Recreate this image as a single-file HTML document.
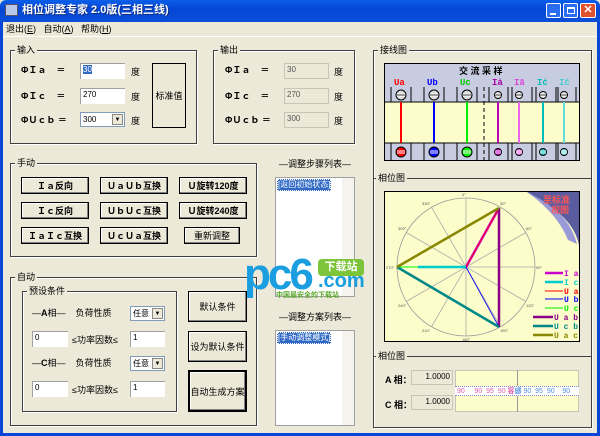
<!DOCTYPE html>
<html><head><meta charset="utf-8"><style>
*{margin:0;padding:0;box-sizing:border-box}
body{width:600px;height:436px;overflow:hidden;background:#ece9d8;font-family:"Liberation Sans","Noto Sans CJK SC",sans-serif;font-size:9px;color:#000;position:relative}
.a{position:absolute}
.grp{position:absolute;border:1px solid #404040;box-shadow:1px 1px 0 #fff inset,1px 1px 0 #fff}
.gt{position:absolute;background:#ece9d8;padding:0 2px;top:-7px;left:4px;font-size:9px;line-height:12px}
.btn{position:absolute;border:1px solid #000;box-shadow:inset -1px -1px 0 #808080,inset 1px 1px 0 #fff;display:flex;align-items:center;justify-content:center;font-size:9px;font-weight:bold;background:#ece9d8}
.in{position:absolute;background:#fff;border-top:1px solid #a0a0a0;border-left:1px solid #a0a0a0;font-size:8px;padding:1px 2px;line-height:10px}
.ro{position:absolute;background:#ece9d8;border:1px solid #c8c5b5;font-size:8px;padding:1px 2px;color:#555;line-height:10px}
.lb{position:absolute;font-size:9px;font-weight:bold;line-height:12px}
.dd{position:absolute;background:#fff;border:1px solid #7f9db9;font-size:8px;line-height:13px;padding-left:2px}
.dd i{position:absolute;right:1px;top:1px;width:11px;height:11px;background:#ece9d8;border:1px solid #888;font-style:normal;font-size:6px;text-align:center;line-height:10px}
</style></head><body>
<div class="a" style="left:0;top:0;width:600px;height:22px;background:linear-gradient(#0a5fe8,#0546d6 40%,#0a4fd8);border-radius:6px 6px 0 0"></div>
<div class="a" style="left:5px;top:4px;width:13px;height:12px;background:#b8c8e8;border:1px solid #556"></div>
<div class="a" style="left:22px;top:3px;color:#fff;font-weight:bold;font-size:11px;line-height:15px;text-shadow:1px 1px #0a2a80">相位调整专家 2.0版(三相三线)</div>
<div class="a" style="left:546px;top:3px;width:15px;height:15px;background:#2b6df0;border:1px solid #fff;border-radius:2px"><div class="a" style="left:3px;top:9px;width:6px;height:2px;background:#fff"></div></div>
<div class="a" style="left:563px;top:3px;width:15px;height:15px;background:#2b6df0;border:1px solid #fff;border-radius:2px"><div class="a" style="left:3px;top:3px;width:8px;height:7px;border:1px solid #fff;border-top-width:2px"></div></div>
<div class="a" style="left:580px;top:3px;width:16px;height:15px;background:#e0512e;border:1px solid #fff;border-radius:2px;color:#fff;font-weight:bold;font-size:11px;text-align:center;line-height:13px">✕</div>
<div class="a" style="left:0;top:22px;width:3px;height:414px;background:#0846d8"></div>
<div class="a" style="left:597px;top:22px;width:3px;height:414px;background:#0846d8"></div>
<div class="a" style="left:0;top:433px;width:600px;height:3px;background:#0846d8"></div>
<div class="a" style="left:6px;top:23px;font-size:9px;line-height:12px">退出(<u>E</u>)&nbsp;&nbsp;&nbsp;自动(<u>A</u>)&nbsp;&nbsp;&nbsp;帮助(<u>H</u>)</div>
<div class="a" style="left:3px;top:36px;width:594px;height:1px;background:#fff"></div>

<div class="grp" style="left:10px;top:50px;width:187px;height:94px"><div class="gt">输入</div></div>
<div class="lb" style="left:21px;top:64px">ΦＩａ&nbsp;&nbsp;&nbsp;&nbsp;＝</div>
<div class="lb" style="left:21px;top:90px">ΦＩｃ&nbsp;&nbsp;&nbsp;&nbsp;＝</div>
<div class="lb" style="left:21px;top:114px">ΦＵｃｂ ＝</div>
<div class="in" style="left:80px;top:63px;width:45px;height:16px"><span style="background:#316ac5;color:#fff">30</span></div>
<div class="in" style="left:80px;top:88px;width:45px;height:16px">270</div>
<div class="dd" style="left:80px;top:112px;width:45px;height:15px">300<i>▼</i></div>
<div class="a" style="left:131px;top:65px">度</div><div class="a" style="left:131px;top:90px">度</div><div class="a" style="left:131px;top:114px">度</div>
<div class="a" style="left:152px;top:63px;width:34px;height:65px;border:1px solid #000;display:flex;align-items:center;justify-content:center;font-size:9px">标准值</div>

<div class="grp" style="left:213px;top:50px;width:142px;height:94px"><div class="gt">输出</div></div>
<div class="lb" style="left:225px;top:64px">ΦＩａ&nbsp;&nbsp;&nbsp;&nbsp;＝</div>
<div class="lb" style="left:225px;top:90px">ΦＩｃ&nbsp;&nbsp;&nbsp;&nbsp;＝</div>
<div class="lb" style="left:225px;top:114px">ΦＵｃｂ ＝</div>
<div class="ro" style="left:284px;top:63px;width:45px;height:16px">30</div>
<div class="ro" style="left:284px;top:88px;width:45px;height:16px">270</div>
<div class="ro" style="left:284px;top:112px;width:45px;height:16px">300</div>
<div class="a" style="left:334px;top:65px">度</div><div class="a" style="left:334px;top:90px">度</div><div class="a" style="left:334px;top:114px">度</div>

<div class="grp" style="left:10px;top:163px;width:247px;height:94px"><div class="gt">手动</div></div>
<div class="btn" style="left:21px;top:177px;width:68px;height:17px">Ｉａ反向</div>
<div class="btn" style="left:100px;top:177px;width:68px;height:17px">ＵａＵｂ互换</div>
<div class="btn" style="left:179px;top:177px;width:68px;height:17px">Ｕ旋转120度</div>
<div class="btn" style="left:21px;top:202px;width:68px;height:17px">Ｉｃ反向</div>
<div class="btn" style="left:100px;top:202px;width:68px;height:17px">ＵｂＵｃ互换</div>
<div class="btn" style="left:179px;top:202px;width:68px;height:17px">Ｕ旋转240度</div>
<div class="btn" style="left:21px;top:227px;width:68px;height:17px">ＩａＩｃ互换</div>
<div class="btn" style="left:100px;top:227px;width:68px;height:17px">ＵｃＵａ互换</div>
<div class="btn" style="left:184px;top:227px;width:56px;height:17px;font-weight:normal">重新调整</div>

<div class="a" style="left:279px;top:157px;font-size:9px">—调整步骤列表—</div>
<div class="a" style="left:275px;top:177px;width:80px;height:120px;background:#fff;border:1px solid #a0a0a0"><span style="position:absolute;left:1px;top:1px;background:#316ac5;color:#fff;font-size:8px;line-height:10px;border:1px dotted #fff">[返回初始状态]</span><div class="a" style="right:0;top:0;width:12px;height:118px;background:#f4f3ee"></div></div>
<div class="a" style="left:279px;top:310px;font-size:9px">—调整方案列表—</div>
<div class="a" style="left:275px;top:330px;width:80px;height:96px;background:#fff;border:1px solid #a0a0a0"><span style="position:absolute;left:1px;top:1px;background:#316ac5;color:#fff;font-size:8px;line-height:10px;border:1px dotted #fff">[手动调整模式]</span><div class="a" style="right:0;top:0;width:12px;height:94px;background:#f4f3ee"></div></div>

<div class="grp" style="left:10px;top:277px;width:247px;height:149px"><div class="gt">自动</div></div>
<div class="grp" style="left:22px;top:291px;width:155px;height:121px"><div class="gt">预设条件</div></div>
<div class="a" style="left:32px;top:307px;font-size:9px;line-height:12px">—<b>A</b>相—&nbsp;&nbsp;&nbsp;&nbsp;负荷性质</div>
<div class="dd" style="left:130px;top:306px;width:35px;height:15px">任意<i>▼</i></div>
<div class="in" style="left:32px;top:331px;width:36px;height:16px">0</div>
<div class="a" style="left:72px;top:333px">≤功率因数≤</div>
<div class="in" style="left:130px;top:331px;width:35px;height:16px">1</div>
<div class="a" style="left:32px;top:357px;font-size:9px;line-height:12px">—<b>C</b>相—&nbsp;&nbsp;&nbsp;&nbsp;负荷性质</div>
<div class="dd" style="left:130px;top:356px;width:35px;height:15px">任意<i>▼</i></div>
<div class="in" style="left:32px;top:381px;width:36px;height:16px">0</div>
<div class="a" style="left:72px;top:383px">≤功率因数≤</div>
<div class="in" style="left:130px;top:381px;width:35px;height:16px">1</div>
<div class="btn" style="left:188px;top:291px;width:59px;height:31px;font-weight:normal">默认条件</div>
<div class="btn" style="left:188px;top:331px;width:59px;height:31px;font-weight:normal">设为默认条件</div>
<div class="btn" style="left:188px;top:370px;width:59px;height:42px;font-weight:normal;border:2px solid #000">自动生成方案</div>

<div class="a" style="left:244px;top:253px;font-size:44px;font-weight:bold;color:#1a9ee0;line-height:44px;letter-spacing:-3px">pc6</div>
<div class="a" style="left:318px;top:259px;width:46px;height:17px;background:#7cc43a;border-radius:4px;color:#fff;font-size:11px;font-weight:bold;text-align:center;line-height:17px">下载站</div>
<div class="a" style="left:318px;top:270px;font-size:20px;font-weight:bold;color:#1a9ee0;line-height:22px">.com</div>
<div class="a" style="left:276px;top:291px;font-size:7px;color:#5aa82a;font-weight:bold;line-height:9px">中国最安全的下载站</div>

<div class="grp" style="left:373px;top:50px;width:219px;height:378px"><div class="gt">接线图</div></div>
<div class="a" style="left:373px;top:178px;width:219px;height:1px;background:#404040"></div>
<div class="a" style="left:376px;top:172px;background:#ece9d8;padding:0 2px;line-height:12px">相位图</div>
<div class="a" style="left:373px;top:356px;width:219px;height:1px;background:#404040"></div>
<div class="a" style="left:376px;top:350px;background:#ece9d8;padding:0 2px;line-height:12px">相位图</div>

<svg class="a" style="left:384px;top:63px" width="196" height="98" viewBox="0 0 196 98">
<rect x="0.5" y="0.5" width="195" height="97" fill="#fdfccb" stroke="#000"/>
<rect x="1" y="1" width="194" height="23" fill="#c8cce0"/>
<rect x="1" y="24" width="194" height="15" fill="#c8cce0"/>
<rect x="1" y="80" width="194" height="17" fill="#c8cce0"/>
<line x1="0" y1="39" x2="196" y2="39" stroke="#000"/><line x1="0" y1="80" x2="196" y2="80" stroke="#000"/>
<text x="75" y="11" font-size="9" font-weight="bold" font-family="Liberation Sans,Noto Sans CJK SC,sans-serif">交 流 采 样</text>
<g font-size="9" font-weight="bold" font-family="Liberation Mono,monospace">
<text x="10" y="22" fill="#f00">Ua</text><text x="43" y="22" fill="#00f">Ub</text><text x="76" y="22" fill="#0c0">Uc</text>
<text x="108" y="22" fill="#a0a">Iȧ</text><text x="130" y="22" fill="#d4d">Iā</text><text x="153" y="22" fill="#0bb">Iċ</text><text x="175" y="22" fill="#4cc">Ic̄</text></g>
<g stroke="#000" stroke-width="1">
<line x1="7" y1="24" x2="7" y2="39"/><line x1="27" y1="24" x2="27" y2="39"/><line x1="40" y1="24" x2="40" y2="39"/><line x1="60" y1="24" x2="60" y2="39"/><line x1="73" y1="24" x2="73" y2="39"/><line x1="93" y1="24" x2="93" y2="39"/><line x1="105" y1="24" x2="105" y2="39"/><line x1="124" y1="24" x2="124" y2="39"/><line x1="128" y1="24" x2="128" y2="39"/><line x1="148" y1="24" x2="148" y2="39"/><line x1="152" y1="24" x2="152" y2="39"/><line x1="172" y1="24" x2="172" y2="39"/><line x1="174" y1="24" x2="174" y2="39"/><line x1="192" y1="24" x2="192" y2="39"/>
<line x1="7" y1="80" x2="7" y2="97"/><line x1="27" y1="80" x2="27" y2="97"/><line x1="40" y1="80" x2="40" y2="97"/><line x1="60" y1="80" x2="60" y2="97"/><line x1="73" y1="80" x2="73" y2="97"/><line x1="93" y1="80" x2="93" y2="97"/><line x1="105" y1="80" x2="105" y2="97"/><line x1="124" y1="80" x2="124" y2="97"/><line x1="128" y1="80" x2="128" y2="97"/><line x1="148" y1="80" x2="148" y2="97"/><line x1="152" y1="80" x2="152" y2="97"/><line x1="172" y1="80" x2="172" y2="97"/><line x1="174" y1="80" x2="174" y2="97"/><line x1="192" y1="80" x2="192" y2="97"/>
</g>
<line x1="100" y1="24" x2="100" y2="97" stroke="#000" stroke-dasharray="4,3"/>
<g stroke-width="2"><line x1="17" y1="39" x2="17" y2="80" stroke="#f00"/><line x1="50" y1="39" x2="50" y2="80" stroke="#00f"/><line x1="83" y1="39" x2="83" y2="80" stroke="#0e0"/><line x1="114" y1="39" x2="114" y2="80" stroke="#b0b"/><line x1="135" y1="39" x2="135" y2="80" stroke="#e6e"/><line x1="159" y1="39" x2="159" y2="80" stroke="#0bb"/><line x1="180" y1="39" x2="180" y2="80" stroke="#6dd"/></g>
<g stroke="#000" stroke-width="1">
<circle cx="17" cy="32" r="5" fill="#ddd"/><circle cx="50" cy="32" r="5" fill="#ddd"/><circle cx="83" cy="32" r="5" fill="#ddd"/><circle cx="114" cy="32" r="3.5" fill="#ddd"/><circle cx="135" cy="32" r="3.5" fill="#ddd"/><circle cx="159" cy="32" r="3.5" fill="#ddd"/><circle cx="180" cy="32" r="3.5" fill="#ddd"/>
<circle cx="17" cy="89" r="5" fill="#f00"/><circle cx="50" cy="89" r="5" fill="#00f"/><circle cx="83" cy="89" r="5" fill="#0e0"/><circle cx="114" cy="89" r="3.5" fill="#b0b"/><circle cx="135" cy="89" r="3.5" fill="#e6e"/><circle cx="159" cy="89" r="3.5" fill="#0bb"/><circle cx="180" cy="89" r="3.5" fill="#6dd"/>
</g>
<path d="M13 31h8M13 33h8M46 31h8M46 33h8M79 31h8M79 33h8M111 31h6M111 33h6M132 31h6M132 33h6M156 31h6M156 33h6M177 31h6M177 33h6M13 88h8M13 90h8M46 88h8M46 90h8M79 88h8M79 90h8M111 88h6M111 90h6M132 88h6M132 90h6M156 88h6M156 90h6M177 88h6M177 90h6" stroke="#fff" stroke-width="1"/>
<path d="M13 32h8M46 32h8M79 32h8M111 32h6M132 32h6M156 32h6M177 32h6" stroke="#000" stroke-width="0.8"/>
</svg>

<svg class="a" style="left:384px;top:191px" width="196" height="151" viewBox="384 191 196 151" font-family="Liberation Sans,sans-serif">
<rect x="384.5" y="191.5" width="195" height="150" fill="#fdfccb" stroke="#000"/>
<circle cx="466" cy="267" r="69" fill="none" stroke="#999" stroke-width="0.8"/>
<g stroke="#aaa" stroke-width="0.8">
<line x1="466" y1="198" x2="466" y2="336"/><line x1="397" y1="267" x2="535" y2="267"/>
<line x1="500.5" y1="207.2" x2="431.5" y2="326.8"/><line x1="525.8" y1="232.5" x2="406.2" y2="301.5"/>
<line x1="431.5" y1="207.2" x2="500.5" y2="326.8"/><line x1="406.2" y1="232.5" x2="525.8" y2="301.5"/></g>
<g font-size="4" fill="#555"><text x="462" y="196">0°</text><text x="500" y="205">30°</text><text x="526" y="230">60°</text><text x="536" y="269">90°</text><text x="526" y="307">120°</text><text x="500" y="332">150°</text><text x="462" y="341">180°</text><text x="422" y="332">210°</text><text x="398" y="307">240°</text><text x="386" y="269">270°</text><text x="398" y="230">300°</text><text x="422" y="205">330°</text></g>
<line x1="466" y1="267" x2="499" y2="208" stroke="#c0c" stroke-width="2.5"/>
<line x1="466" y1="267" x2="499" y2="208" stroke="#f00" stroke-width="0.8"/>
<line x1="397" y1="267" x2="466" y2="267" stroke="#0f0" stroke-width="1"/>
<line x1="418" y1="267" x2="466" y2="267" stroke="#0cc" stroke-width="2.5"/>
<line x1="466" y1="267" x2="499" y2="327" stroke="#00f" stroke-width="0.8"/>
<line x1="499" y1="208" x2="499" y2="327" stroke="#808" stroke-width="2.5"/>
<line x1="397" y1="267" x2="499" y2="327" stroke="#088" stroke-width="2.5"/>
<line x1="397" y1="267" x2="499" y2="208" stroke="#880" stroke-width="2.5"/>
<path d="M527 192 L579 192 L579 245 C575 225 560 210 527 192Z" fill="#5a5ca0"/>
<path d="M527 192 C560 208 572 225 577 244 L568 240 C560 220 545 205 527 192Z" fill="#9a9ad8"/>
<text x="543" y="203" font-size="9" font-weight="bold" fill="#f55" font-family="Noto Sans CJK SC,sans-serif">至标准</text>
<text x="551" y="213" font-size="9" font-weight="bold" fill="#f55" font-family="Noto Sans CJK SC,sans-serif">视图</text>
<g font-size="8" font-weight="bold" font-family="Liberation Mono,monospace">
<line x1="545" y1="273" x2="563" y2="273" stroke="#c0c" stroke-width="2.5"/><text x="564" y="276" fill="#c0c">I a</text>
<line x1="545" y1="282" x2="563" y2="282" stroke="#0cc" stroke-width="2.5"/><text x="564" y="285" fill="#0cc">I c</text>
<line x1="545" y1="291" x2="563" y2="291" stroke="#f00"/><text x="564" y="294" fill="#f00">U a</text>
<line x1="545" y1="299" x2="563" y2="299" stroke="#00f"/><text x="564" y="302" fill="#00f">U b</text>
<line x1="545" y1="308" x2="563" y2="308" stroke="#0e0"/><text x="564" y="311" fill="#0e0">U c</text>
<line x1="533" y1="317" x2="553" y2="317" stroke="#808" stroke-width="2.5"/><text x="554" y="320" fill="#808">U a b</text>
<line x1="533" y1="326" x2="553" y2="326" stroke="#088" stroke-width="2.5"/><text x="554" y="329" fill="#088">U c b</text>
<line x1="533" y1="335" x2="553" y2="335" stroke="#880" stroke-width="2.5"/><text x="554" y="338" fill="#880">U a c</text></g>
</svg>

<div class="a" style="left:385px;top:373px;font-size:9px;font-weight:bold">A 相：</div>
<div class="a" style="left:385px;top:398px;font-size:9px;font-weight:bold">C 相：</div>
<div class="ro" style="left:411px;top:370px;width:42px;height:15px;text-align:right;color:#000">1.0000</div>
<div class="ro" style="left:411px;top:395px;width:42px;height:15px;text-align:right;color:#000">1.0000</div>
<div class="a" style="left:455px;top:370px;width:124px;height:42px;background:#fdfccb;border:1px solid #c8c5b5"></div>
<div class="a" style="left:517px;top:370px;width:1px;height:42px;background:#999"></div>
<div class="a" style="left:455px;top:386px;width:124px;height:10px;background:#fff;border-top:1px dotted #88c;border-bottom:1px dotted #88c;font-size:7px;line-height:9px;white-space:nowrap;overflow:hidden"><span style="color:#e060b0">&nbsp;90 &nbsp;&nbsp;&nbsp;&nbsp;90 &nbsp;95 &nbsp;90 <b>容</b></span><span style="color:#5090e0"><b>感</b> 90 &nbsp;95 &nbsp;90 &nbsp;&nbsp;&nbsp;90</span></div>
</body></html>
